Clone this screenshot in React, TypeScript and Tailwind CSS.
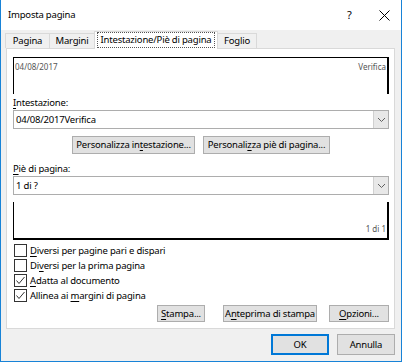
import React from "react";

const F = { fontFamily: '"Noto Sans", sans-serif' };

function U({ children }: { children: React.ReactNode }) {
  return <span className="underline underline-offset-[2px] decoration-1">{children}</span>;
}

function Chevron() {
  return (
    <svg width="9" height="6" viewBox="0 0 9 6">
      <polyline points="1,1 4.5,4.5 8,1" fill="none" stroke="#606060" strokeWidth="1" />
    </svg>
  );
}

function Select({ value }: { value: string }) {
  return (
    <div className="flex h-[19px] border border-[#adadad] bg-white">
      <div className="flex-1 flex items-center pl-[2px] text-[9.5px] tracking-[-0.2px] text-black leading-none whitespace-nowrap">
        {value}
      </div>
      <div className="w-[15px] flex items-center justify-center bg-[#e8e8e8] border-l border-[#d0d0d0]">
        <Chevron />
      </div>
    </div>
  );
}

function Btn({ children, className = "" }: { children: React.ReactNode; className?: string }) {
  return (
    <div
      className={
        "flex items-center justify-center bg-[#e1e1e1] border border-[#adadad] text-[9.5px] tracking-[-0.2px] text-black leading-none whitespace-nowrap shrink-0 " +
        className
      }
    >
      {children}
    </div>
  );
}

function Check({ checked, children }: { checked?: boolean; children: React.ReactNode }) {
  return (
    <div className="flex items-center h-[15px]">
      <div className="w-[13px] h-[13px] border border-[#333] bg-white flex items-center justify-center shrink-0">
        {checked && (
          <svg width="11" height="11" viewBox="0 0 11 11">
            <polyline points="1.5,5.5 4,8.5 9.5,2" fill="none" stroke="#333" strokeWidth="1" />
          </svg>
        )}
      </div>
      <div className="ml-[3px] text-[9.5px] tracking-[-0.2px] text-black leading-none whitespace-nowrap">{children}</div>
    </div>
  );
}

export default function App() {
  return (
    <div
      style={F}
      className="w-[402px] h-[362px] bg-[#f0f0f0] border-l border-r border-b border-[#1883d7] flex flex-col overflow-hidden"
    >
      {/* title bar */}
      <div className="h-[30px] bg-white flex items-center pl-[7px] shrink-0">
        <div className="text-[9.5px] tracking-[-0.2px] text-black flex-1 whitespace-nowrap">Imposta pagina</div>
        <div className="text-[11px] text-black w-[12px] mr-[20px]">?</div>
        <svg width="11" height="11" viewBox="0 0 11 11" className="mr-[11px]">
          <path d="M0.5 0.5 L10.5 10.5 M10.5 0.5 L0.5 10.5" stroke="#000" strokeWidth="1" />
        </svg>
      </div>

      {/* tabs */}
      <div className="flex items-end h-[18px] pl-[4px] shrink-0 relative z-10">
        <div className="h-[15px] flex items-center justify-center border-t border-l border-[#d9d9d9] bg-[#f0f0f0] text-[9.5px] tracking-[-0.2px] leading-none w-[44px] whitespace-nowrap">
          Pagina
        </div>
        <div className="h-[15px] flex items-center justify-center border-t border-l border-[#d9d9d9] bg-[#f0f0f0] text-[9.5px] tracking-[-0.2px] leading-none w-[45px] whitespace-nowrap">
          Margini
        </div>
        <div className="h-[18px] flex items-center justify-center border-t border-l border-r border-[#d9d9d9] bg-white text-[9.5px] tracking-[-0.2px] leading-none w-[124px] mb-[-1px] pb-[1px] whitespace-nowrap">
          <span className="border border-dotted border-[#555] px-[3px] py-[2px]">Intestazione/Piè di pagina</span>
        </div>
        <div className="h-[15px] flex items-center justify-center border-t border-r border-[#d9d9d9] bg-[#f0f0f0] text-[9.5px] tracking-[-0.2px] leading-none w-[39px] whitespace-nowrap">
          Foglio
        </div>
      </div>

      {/* panel */}
      <div className="ml-[5px] mr-[6px] h-[281px] bg-white border border-[#d9d9d9] shrink-0 flex flex-col pl-[6px] pr-[5px]">
        {/* header preview */}
        <div className="mt-[8px] h-[37px] border-t border-l border-r-2 border-black flex justify-between pl-[1px] pr-[1px] pt-[5px] text-[8px] text-[#555] leading-none whitespace-nowrap">
          <span>04/08/2017</span>
          <span>Verifica</span>
        </div>
        <div className="mt-[2px] h-[14px] flex items-center text-[9.5px] tracking-[-0.2px] text-black leading-none whitespace-nowrap">
          <span>
            <U>I</U>ntestazione:
          </span>
        </div>
        <Select value="04/08/2017Verifica" />
        <div className="flex justify-center gap-[8px] mt-[7px]">
          <Btn className="w-[123px] h-[18px]">
            Personalizza in<U>t</U>estazione...
          </Btn>
          <Btn className="w-[127px] h-[18px]">
            Personali<U>z</U>za piè di pagina...
          </Btn>
        </div>
        <div className="mt-[8px] h-[14px] flex items-center text-[9.5px] tracking-[-0.2px] text-black leading-none whitespace-nowrap">
          <span>
            <U>P</U>iè di pagina:
          </span>
        </div>
        <Select value="1 di ?" />
        <div className="mt-[7px] h-[38px] border-b-2 border-l border-r-2 border-black flex items-end justify-end pr-[1px] pb-[5px] text-[8px] text-[#555] leading-none whitespace-nowrap">
          1 di 1
        </div>
        <div className="mt-[3px] flex flex-col pl-[1px]">
          <Check>
            <U>D</U>iversi per pagine pari e dispari
          </Check>
          <Check>
            Di<U>v</U>ersi per la prima pagina
          </Check>
          <Check checked>
            <U>A</U>datta al documento
          </Check>
          <Check checked>
            Allinea ai <U>m</U>argini di pagina
          </Check>
        </div>
        <div className="flex justify-end mt-[2px]">
          <Btn className="w-[48px] h-[17px] mr-[18px]">
            <U>S</U>tampa...
          </Btn>
          <Btn className="w-[94px] h-[17px] mr-[12px]">
            A<U>n</U>teprima di stampa
          </Btn>
          <Btn className="w-[60px] h-[17px]">
            <U>O</U>pzioni...
          </Btn>
        </div>
      </div>

      {/* bottom buttons */}
      <div className="flex justify-end mt-[5px] mr-[6px] gap-[8px]">
        <Btn className="w-[58px] h-[21px] !border-[#0078d7] !border-2">OK</Btn>
        <Btn className="w-[58px] h-[21px]">Annulla</Btn>
      </div>
    </div>
  );
}
